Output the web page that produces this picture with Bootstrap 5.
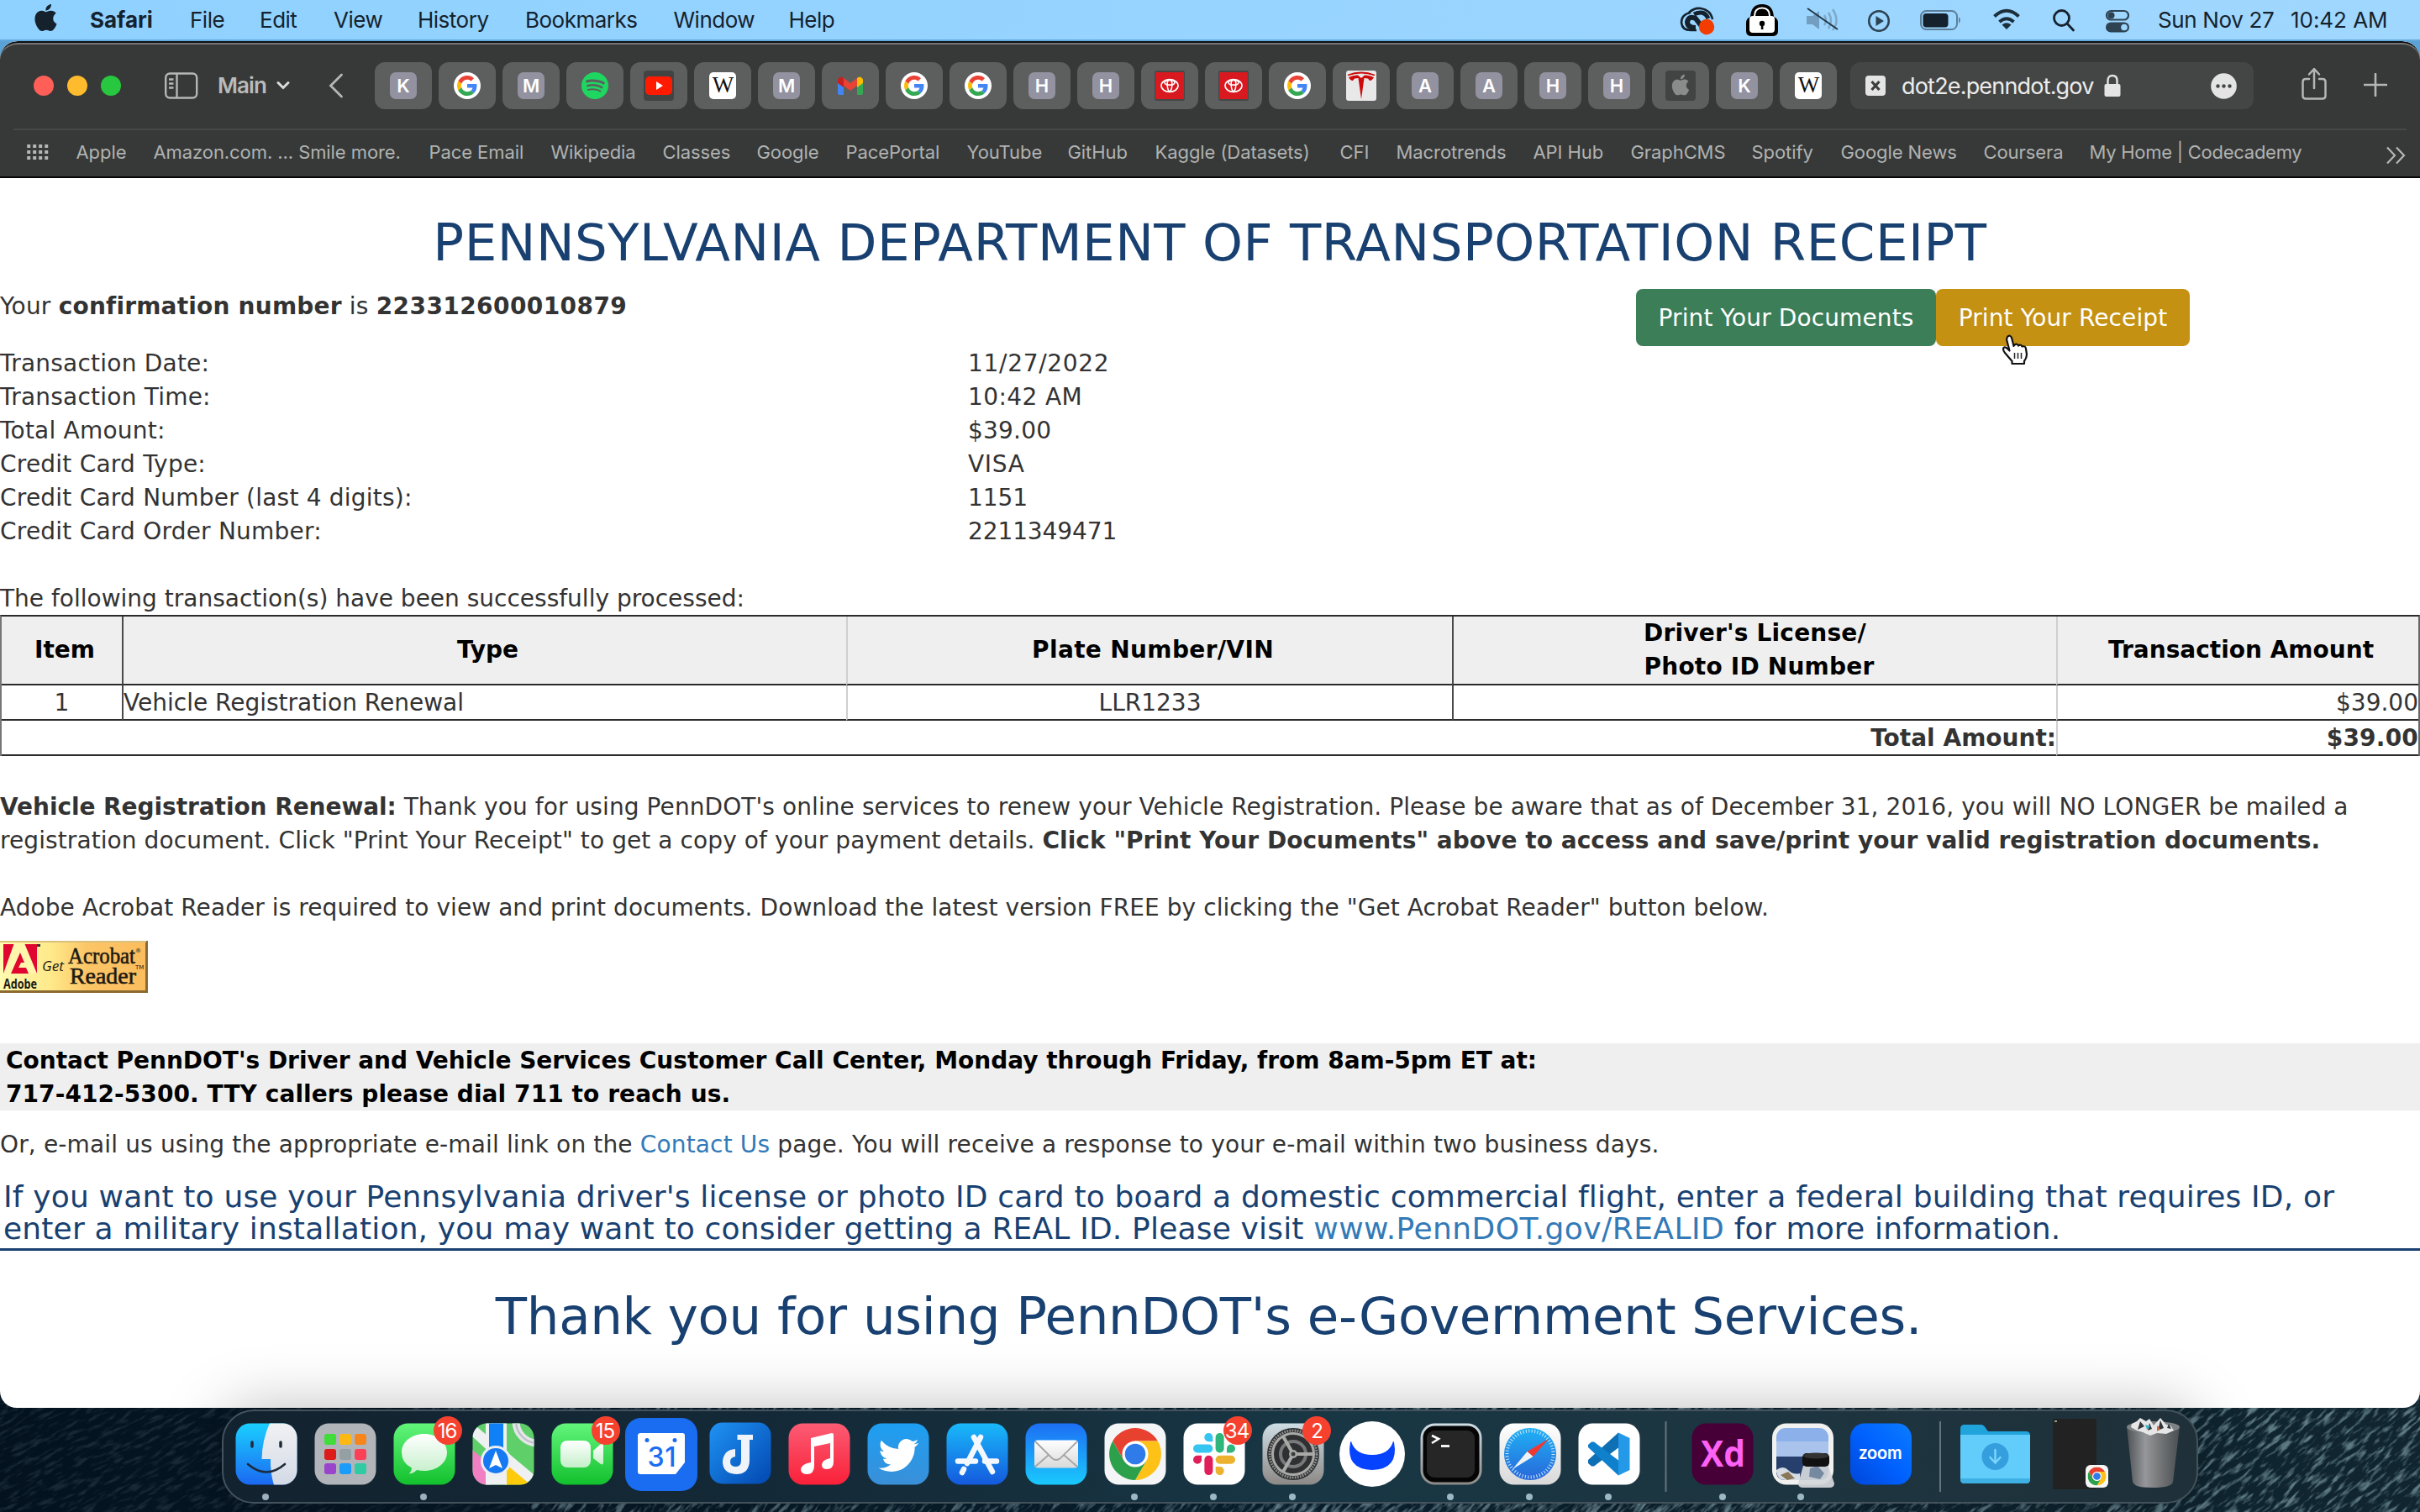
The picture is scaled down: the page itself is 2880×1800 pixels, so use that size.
<!DOCTYPE html>
<html lang="en">
<head>
<meta charset="utf-8">
<title>PennDOT Receipt</title>
<link rel="stylesheet" href="https://cdn.jsdelivr.net/npm/bootstrap@5.3.0/dist/css/bootstrap.min.css">
<script src="https://cdn.jsdelivr.net/npm/bootstrap@5.3.0/dist/js/bootstrap.bundle.min.js"></script>
<style>
html,body{width:2880px;height:1800px;overflow:hidden}
body{background:#04121f;font-family:Inter,"Liberation Sans",sans-serif}
svg{display:block;flex:none}
.wallpaper{left:0;top:0;z-index:0}
/* menu bar */
.menubar{height:49px;background:linear-gradient(90deg,#8fd1ff,#97d4ff 50%,#a0d7ff);font-size:26px;line-height:47px;color:#15222d;border-bottom:2px solid #62a9dd;white-space:nowrap}
.menus{display:grid;grid-template-columns:67px 119px 83px 88px 100px 128px 176.5px 137px 70px;padding-left:40px;letter-spacing:-.5px}
.status{display:grid;grid-template-columns:80px 72px 73px 62px 87px 71px 63px 63px 158px 155px;letter-spacing:-.35px}
/* browser window */
.browser{height:1627px;border-radius:21px 21px 20px 20px;overflow:hidden;background:#fff;z-index:1}
.chrome{height:163px;background:#373938;border-top:2px solid #0d0f10;border-bottom:2px solid #050505;box-shadow:inset 0 2px 0 #747675;border-radius:21px 21px 0 0}
.toolrow{height:102px;padding:0 0 0 40px}
.light{width:24px;height:24px;border-radius:50%}
.mainlabel{font-size:26px;font-weight:600;color:#b9bbba;letter-spacing:-.9px;line-height:30px}
.tab{width:68px;height:56px;border-radius:12px;background:#5d5f5e;display:flex;align-items:center;justify-content:center}
.tabs{gap:8px}
.letter{width:32px;height:32px;border-radius:7px;background:#9292a0;color:#fff;font-size:22px;font-weight:600;line-height:32px;text-align:center}
.wiki{width:32px;height:32px;border-radius:5px;background:#fff;color:#111;font:27px/31px "Liberation Serif",serif;text-align:center;letter-spacing:-1px}
.address{width:480px;height:56px;border-radius:12px;background:#444645;padding:0 20px 0 18px}
.urltext{font-size:27px;letter-spacing:-.82px;color:#ececec;line-height:50px;padding-top:2px}
.rule{height:2px;margin:0 16px;background:#464847}
.bookmarks{display:grid;grid-template-columns:58.5px 92px 328px 145px 133px 112px 106px 144px 120px 104px 220px 67px 163px 116px 144px 106px 170px 126px 352px 30px;padding-left:32px;height:54px;line-height:53px;font-size:22px;color:#b0b2b1;letter-spacing:-.08px;white-space:nowrap}
/* receipt page */
.receipt{font-family:"DejaVu Sans",Verdana,sans-serif;font-size:28px;line-height:40px;color:#333;padding-top:44px;white-space:nowrap}
.bigline{font-size:61px;line-height:66px;color:#184070;font-weight:400;margin:0}
.heading{letter-spacing:.53px;margin-bottom:23px}
.thanks{letter-spacing:-.31px;margin-top:45px;padding-right:3px}
.details{display:grid;grid-template-columns:1152px 1fr;margin-top:28px;letter-spacing:.22px}
.pbtn{height:68px;border:0;border-radius:8px;font-size:28px;line-height:67px;padding:0;color:#fff;letter-spacing:.12px}
.pdocs{width:357px;background:#3b7e58}
.prcpt{width:302px;background:#c49112}
.actions{margin:-1px 274px 0 0;height:28px}
.items{width:2880px;table-layout:fixed;border-collapse:separate;border-spacing:0;margin-top:-1px;border-top:2px solid #2b2b2b;border-left:2px solid #777;border-right:2px solid #666}
.items th,.items td{padding:2px 0 0;line-height:38px;border-bottom:2px solid #2b2b2b;height:42px}
.items th{background:#efefef;color:#000;text-align:center;padding-left:7px;line-height:40px;height:82px;padding-top:0}
.items .ldark{border-left:2px solid #4a4a4a}
.items .llight{border-left:2px solid #cfcfcf}
.acro{margin-top:19px}
.contact{background:#efefef;color:#000;font-weight:700;height:80px;padding:1px 0 0 7px;margin-top:60px;letter-spacing:-.02px}
.realid{font-size:36px;line-height:38px;color:#184070;margin:23px 0 0;padding:0 0 4px 4px;border-bottom:3px solid #184070;letter-spacing:.175px}
.receipt a{color:#337ab7;text-decoration:none}
/* dock */
.dockwrap{z-index:2;padding:2px 0 0 264px}
.dock{width:2352px;height:112px;border:2px solid #43525c;border-radius:38px;background:linear-gradient(90deg,#13222f,#142a38 30%,#183644 55%,#1d3540 80%,#1f3039);padding-left:4px;box-shadow:0 0 74px rgba(0,0,0,.27)}
.cursor{left:2381px;top:396px;z-index:3}
.badgenum{font:24px Inter,sans-serif;fill:#fff;text-anchor:middle;letter-spacing:-1px}
</style>
</head>
<body>
<svg width="0" height="0" class="position-absolute">
<defs>
<symbol id="g" viewBox="0 0 32 32"><circle cx="16" cy="16" r="16" fill="#fff"/><g transform="translate(4 4) scale(.5)"><path fill="#ea4335" d="M24 9.5c3.54 0 6.71 1.22 9.21 3.6l6.85-6.85C35.9 2.38 30.47 0 24 0 14.62 0 6.51 5.38 2.56 13.22l7.98 6.19C12.43 13.72 17.74 9.5 24 9.5z"/><path fill="#4285f4" d="M46.98 24.55c0-1.57-.15-3.09-.38-4.55H24v9.02h12.94c-.58 2.96-2.26 5.48-4.78 7.18l7.73 6c4.51-4.18 7.09-10.36 7.09-17.65z"/><path fill="#fbbc05" d="M10.53 28.59c-.48-1.45-.76-2.99-.76-4.59s.27-3.14.76-4.59l-7.98-6.19C.92 16.46 0 20.12 0 24c0 3.88.92 7.54 2.56 10.78l7.97-6.19z"/><path fill="#34a853" d="M24 48c6.48 0 11.93-2.13 15.89-5.81l-7.73-6c-2.15 1.45-4.92 2.3-8.16 2.3-6.26 0-11.57-4.22-13.47-9.91l-7.98 6.19C6.51 42.62 14.62 48 24 48z"/></g></symbol>
<symbol id="apple" viewBox="0 0 16 16"><path d="M11.182.008C11.148-.03 9.923.023 8.857 1.18c-1.066 1.156-.902 2.482-.878 2.516.024.034 1.52.087 2.475-1.258.955-1.345.762-2.391.728-2.43Zm3.314 11.733c-.048-.096-2.325-1.234-2.113-3.422.212-2.189 1.675-2.789 1.698-2.854.023-.065-.597-.79-1.254-1.157a3.692 3.692 0 0 0-1.563-.434c-.108-.003-.483-.095-1.254.116-.508.139-1.653.589-1.968.607-.316.018-1.256-.522-2.267-.665-.647-.125-1.333.131-1.824.328-.49.196-1.422.754-2.074 2.237-.652 1.482-.311 3.83-.067 4.56.244.729.625 1.924 1.273 2.796.576.984 1.34 1.667 1.659 1.899.319.232 1.219.386 1.843.067.502-.308 1.408-.485 1.766-.472.357.013 1.061.154 1.782.539.571.197 1.111.115 1.652-.105.541-.221 1.324-1.059 2.238-2.758.347-.79.505-1.217.473-1.282Z"/></symbol>
<symbol id="toyota" viewBox="0 0 36 36"><rect width="36" height="36" rx="3" fill="#454746"/><rect x="1" y="2" width="34" height="32" rx="1" fill="#d8191f"/><g fill="none" stroke="#fff" stroke-width="1.6"><ellipse cx="18" cy="18" rx="10" ry="7.4"/><ellipse cx="18" cy="14.3" rx="6" ry="2.8"/><path d="M15.200 14q-.4 9 2.800 11.200 3.200-2.200 2.800-11.200Q20 11 18 10.800 16 11 15.200 14Z"/></g></symbol>
<symbol id="chromelogo" viewBox="-31 -31 62 62"><path fill="#e8412f" d="M-26.8-15.5A31 31 0 0 1 26.8-15.5L0-15.5 0 0-13.4 7.75Z"/><path fill="#fdc117" transform="rotate(120)" d="M-26.8-15.5A31 31 0 0 1 26.8-15.5L0-15.5 0 0-13.4 7.75Z"/><path fill="#2da04b" transform="rotate(240)" d="M-26.8-15.5A31 31 0 0 1 26.8-15.5L0-15.5 0 0-13.4 7.75Z"/><circle r="15.5" fill="#fff"/><circle r="12.3" fill="#2f7be9"/></symbol>
<linearGradient id="gFinder" x2="0" y2="1"><stop stop-color="#1ad0ff"/><stop offset="1" stop-color="#1b68f2"/></linearGradient>
<linearGradient id="gFace" x2="0" y2="1"><stop stop-color="#f1f1f3"/><stop offset="1" stop-color="#d3dae6"/></linearGradient>
<linearGradient id="gGreen" x2="0" y2="1"><stop stop-color="#62f57b"/><stop offset="1" stop-color="#12c02d"/></linearGradient>
<linearGradient id="gWhite" x2="0" y2="1"><stop stop-color="#fff"/><stop offset="1" stop-color="#c4efc9"/></linearGradient>
<linearGradient id="gJ" x2="1" y2="1"><stop stop-color="#1f93f4"/><stop offset="1" stop-color="#0247b0"/></linearGradient>
<linearGradient id="gMusic" x2="0" y2="1"><stop stop-color="#fb5c74"/><stop offset="1" stop-color="#fa2039"/></linearGradient>
<linearGradient id="gTw" x2="0" y2="1"><stop stop-color="#1d9ff2"/><stop offset="1" stop-color="#3a8fd8"/></linearGradient>
<linearGradient id="gStore" x2="0" y2="1"><stop stop-color="#19b9fa"/><stop offset="1" stop-color="#1459dd"/></linearGradient>
<linearGradient id="gMail" x2="0" y2="1"><stop stop-color="#1d6ff3"/><stop offset="1" stop-color="#1ac9fd"/></linearGradient>
<linearGradient id="gSet" x2="0" y2="1"><stop stop-color="#cfdde5"/><stop offset="1" stop-color="#8c8986"/></linearGradient>
<linearGradient id="gPaper" x2="0" y2="1"><stop stop-color="#fff"/><stop offset="1" stop-color="#d9d9d9"/></linearGradient>
<linearGradient id="gSaf" x2="0" y2="1"><stop stop-color="#1fb1f5"/><stop offset="1" stop-color="#2867d9"/></linearGradient>
<linearGradient id="gZoom" x1="1" x2="0" y2="1"><stop stop-color="#0b7cff"/><stop offset=".5" stop-color="#0061ff"/><stop offset="1" stop-color="#0046d8"/></linearGradient>
<linearGradient id="gTrash"><stop stop-color="#4f5254"/><stop offset=".35" stop-color="#95979a"/><stop offset=".6" stop-color="#77797b"/><stop offset="1" stop-color="#4a4e50"/></linearGradient>
<linearGradient id="gAcro"><stop stop-color="#fffbb0"/><stop offset=".35" stop-color="#ffe98a"/><stop offset=".6" stop-color="#fcc566"/><stop offset="1" stop-color="#fbbd5e"/></linearGradient>
<linearGradient id="gSea" x2="1"><stop stop-color="#04121f"/><stop offset=".5" stop-color="#0a2231"/><stop offset="1" stop-color="#10252f"/></linearGradient>
<clipPath id="tile"><rect x="10.5" y="14.5" width="73" height="73" rx="17"/></clipPath>
<filter id="water" x="0" y="0" width="1" height="1"><feTurbulence type="fractalNoise" baseFrequency=".05 .2" numOctaves="4" seed="7"/><feColorMatrix values="0 0 0 0 .34  0 0 0 0 .52  0 0 0 0 .58  4 0 0 0 -1.95"/></filter>
</defs>
</svg>

<svg class="wallpaper position-absolute" width="2880" height="1800">
<rect width="2880" height="120" fill="#5ba3d6"/>
<rect y="1600" width="2880" height="200" fill="url(#gSea)"/>
<g transform="rotate(-28 0 1700)" opacity=".13"><rect y="1500" x="-200" width="900" height="600" filter="url(#water)"/></g>
<g transform="rotate(-50 1500 1740)" opacity=".5"><rect y="900" x="900" width="1000" height="1400" filter="url(#water)"/></g>
<g transform="rotate(-42 2400 1740)" opacity=".55"><rect y="1100" x="1700" width="1500" height="1200" filter="url(#water)"/></g>
</svg>

<nav class="menubar d-flex justify-content-between position-relative">
<div class="menus">
<svg width="28" height="36" viewBox="0 0 28 36" style="margin-top:4px"><use href="#apple" x="-2" y="1" width="33" height="32" fill="#15222d"/></svg>
<span class="fw-bold" style="letter-spacing:0">Safari</span><span>File</span><span>Edit</span><span>View</span><span>History</span><span>Bookmarks</span><span>Window</span><span>Help</span>
</div>
<div class="status">
<svg width="48" height="48" viewBox="0 0 48 48"><g fill="none" stroke="#15222d"><path stroke-width="2.600" d="M16 15Q5 17 5 27 6 36 16 36H23M14 15Q20 9 28 10 40 12 42 23"/><path stroke-width="6" d="M22 33Q12 33 12 26 14 18 22 22L28 30"/><path stroke-width="5" d="M20 17Q32 11 37 22"/></g><circle cx="35" cy="32" r="9.200" fill="#f23c00"/></svg>
<svg width="48" height="48" viewBox="0 0 48 48"><path d="M7 20Q8 5 21 5 34 5 35 20 40 22 40 27V37Q40 43 33 43H9Q2 43 2 37V27Q2 22 7 20Z"/><rect x="6" y="19" width="30" height="20" rx="4" fill="#fff"/><path d="M12 19Q12 9.500 21 9.500T30 19" fill="none" stroke="#fff" stroke-width="2"/><circle cx="21" cy="28" r="3.200"/><path d="M19.800 28h2.600v7h-2.600z"/></svg>
<svg width="48" height="48" viewBox="0 0 48 48"><path fill="#729fc1" d="M2 19h7l8-6v22l-8-6H2Z"/><path fill="none" stroke="#7ea8c8" stroke-width="2.500" d="M23 18q4 6 0 12M28 15q6 9 0 19M33 11q9 14 0 25"/><path stroke="#243644" stroke-width="2" d="M3 10 39 35"/></svg>
<svg width="48" height="48" viewBox="0 0 48 48"><circle cx="15" cy="25" r="11.800" fill="none" stroke="#2d4353" stroke-width="2.500"/><path d="M11.500 19 21 25l-9.500 6Z" fill="#2d4353"/></svg>
<svg width="56" height="48" viewBox="0 0 56 48"><rect x="3" y="13" width="43" height="22" rx="6.500" fill="none" stroke="#5b7f98" stroke-width="2"/><rect x="5.500" y="16" width="30" height="16.500" rx="4" fill="#15222d"/><path d="M48 20q4 4 0 8Z" fill="#5b7f98"/></svg>
<svg width="40" height="48" viewBox="0 0 40 48"><g fill="none" stroke="#1d2e3b" stroke-width="4"><path d="M3.500 19.500Q18 6 32.500 19.500"/><path d="M9.500 26Q18 18.500 26.500 26"/></g><path d="M12.500 29.500q5.500-4.500 11 0L18 35Z" fill="#1d2e3b"/></svg>
<svg width="40" height="48" viewBox="0 0 40 48"><g fill="none" stroke="#15222d" stroke-width="2.800"><circle cx="12.500" cy="21.500" r="9"/><path d="m19 28 7.500 8" stroke-linecap="round"/></g></svg>
<svg width="40" height="48" viewBox="0 0 40 48"><rect x="3" y="13" width="26" height="10.500" rx="5.250" fill="none" stroke="#2d4353" stroke-width="2.200"/><circle cx="8.500" cy="18.200" r="4" fill="#2d4353"/><rect x="2" y="26.500" width="28" height="12" rx="6" fill="#2d4353"/><circle cx="24" cy="32.500" r="3.800" fill="#a0d7ff"/></svg>
<span style="padding-left:1px">Sun Nov 27</span><span style="letter-spacing:-.05px;padding-left:1px">10:42 AM</span>
</div>
</nav>

<main class="browser position-relative">
<header class="chrome">
<div class="toolrow d-flex align-items-center">
<div class="d-flex" style="gap:16px"><span class="light" style="background:#ff5f57"></span><span class="light" style="background:#febb2e"></span><span class="light" style="background:#27c840"></span></div>
<svg width="40" height="32" viewBox="0 0 40 32" style="margin-left:52px"><g fill="none" stroke="#b5b7b6" stroke-width="2.400"><rect x="1.200" y="1.500" width="37" height="29" rx="5"/><path d="M14.500 2v28M5 8.500h5.500M5 13.500h5.500M5 18.500h5.500"/></g></svg>
<span class="mainlabel" style="margin-left:23px;margin-right:-1px">Main</span>
<svg width="16" height="12" viewBox="0 0 16 12" style="margin-left:13px"><path d="m2 2.500 6 6 6-6" fill="none" stroke="#dcdcdc" stroke-width="3" stroke-linecap="round"/></svg>
<svg width="18" height="30" viewBox="0 0 18 30" style="margin-left:46px"><path d="M15.500 2 2.500 15l13 13" fill="none" stroke="#b5b7b6" stroke-width="2.800" stroke-linecap="round"/></svg>
<div class="tabs d-flex" style="margin-left:37px">
<span class="tab"><i class="letter fst-normal">K</i></span>
<span class="tab"><svg width="32" height="32"><use href="#g"/></svg></span>
<span class="tab"><i class="letter fst-normal">M</i></span>
<span class="tab"><svg width="32" height="32" viewBox="0 0 16 16"><path fill="#1ed760" d="M8 0a8 8 0 1 0 0 16A8 8 0 0 0 8 0zm3.669 11.538a.498.498 0 0 1-.686.166c-1.879-1.148-4.243-1.408-7.028-.772a.499.499 0 0 1-.222-.973c3.048-.696 5.662-.397 7.770.892a.5.5 0 0 1 .166.687zm.979-2.178a.624.624 0 0 1-.858.205c-2.150-1.321-5.428-1.704-7.972-.932a.625.625 0 0 1-.362-1.194c2.905-.881 6.517-.454 8.986 1.063a.624.624 0 0 1 .206.858zm.084-2.268C10.154 5.560 5.900 5.419 3.438 6.166a.748.748 0 1 1-.434-1.432c2.825-.857 7.523-.692 10.492 1.070a.747.747 0 1 1-.764 1.288z"/></svg></span>
<span class="tab"><svg width="36" height="36" viewBox="0 0 36 36"><rect width="36" height="36" rx="4" fill="#424443"/><rect x="2" y="7" width="32" height="22" rx="5" fill="#ff1a00"/><path d="m15 13 8 5-8 5Z" fill="#fff"/></svg></span>
<span class="tab"><i class="wiki fst-normal">W</i></span>
<span class="tab"><i class="letter fst-normal">M</i></span>
<span class="tab"><svg width="30" height="22" viewBox="0 0 30 22"><path fill="#4285f4" d="M0 4h7v18H2q-2 0-2-2Z"/><path fill="#34a853" d="M23 4h7v16q0 2-2 2h-5Z"/><path fill="#fbbc04" d="M23 2q3-3 6 0 1 1 1 3v3l-7 5Z"/><path fill="#c5221f" d="M7 2Q4-1 1 2 0 3 0 5v3l7 5Z"/><path fill="#ea4335" d="M7 2l8 6 8-6v9l-8 6-8-6Z"/></svg></span>
<span class="tab"><svg width="32" height="32"><use href="#g"/></svg></span>
<span class="tab"><svg width="32" height="32"><use href="#g"/></svg></span>
<span class="tab"><i class="letter fst-normal">H</i></span>
<span class="tab"><i class="letter fst-normal">H</i></span>
<span class="tab"><svg width="36" height="36"><use href="#toyota"/></svg></span>
<span class="tab"><svg width="36" height="36"><use href="#toyota"/></svg></span>
<span class="tab"><svg width="32" height="32"><use href="#g"/></svg></span>
<span class="tab"><svg width="36" height="36" viewBox="0 0 36 36"><rect width="36" height="36" rx="3" fill="#e8e8e8"/><path fill="none" stroke="#cc0c0c" stroke-width="1.800" d="M2 5.500Q18-.5 34 5.500"/><path fill="#cc0c0c" d="M3 8Q9 5 14 5.500L18 9l4-3.500Q27 5 33 8 31 12 28 12L26 9.500 21.500 9 18 34 14.500 9 10 9.500 8 12Q5 12 3 8Z"/></svg></span>
<span class="tab"><i class="letter fst-normal">A</i></span>
<span class="tab"><i class="letter fst-normal">A</i></span>
<span class="tab"><i class="letter fst-normal">H</i></span>
<span class="tab"><i class="letter fst-normal">H</i></span>
<span class="tab"><svg width="36" height="36"><rect width="36" height="36" rx="4" fill="#424443"/><use href="#apple" x="5.500" y="4.500" width="25" height="25" fill="#8a8c8b"/></svg></span>
<span class="tab"><i class="letter fst-normal">K</i></span>
<span class="tab"><i class="wiki fst-normal">W</i></span>
</div>
<div class="address d-flex align-items-center" style="margin-left:16px">
<svg width="24" height="24" viewBox="0 0 24 24"><rect width="24" height="24" rx="4" fill="#e4e4e4"/><path d="m7.500 7 9 10m0-10-9 10" stroke="#3c3e3d" stroke-width="3.200"/></svg>
<span class="urltext" style="margin-left:19px">dot2e.penndot.gov</span>
<svg width="20" height="28" viewBox="0 0 20 28" style="margin-left:12px"><rect x=".5" y="12" width="19" height="15" rx="2" fill="#e4e4e4"/><path d="M4.500 13V8q0-6 5.500-6t5.500 6v5" fill="none" stroke="#e4e4e4" stroke-width="2.400"/></svg>
<svg width="31" height="31" viewBox="0 0 31 31" class="ms-auto"><circle cx="15.500" cy="15.500" r="15.300" fill="#e4e4e4"/><g fill="#444645"><circle cx="8.500" cy="15.500" r="2.200"/><circle cx="15.500" cy="15.500" r="2.200"/><circle cx="22.500" cy="15.500" r="2.200"/></g></svg>
</div>
<svg width="30" height="40" viewBox="0 0 30 40" style="margin:-4px 0 0 57px"><g fill="none" stroke="#b5b7b6" stroke-width="2.500" stroke-linejoin="round" stroke-linecap="round"><path d="M9 14H5q-3.500 0-3.500 3.500V34q0 3.500 3.500 3.500h20q3.500 0 3.500-3.500V17.500Q28.500 14 25 14h-4M15 25V3M9 8.500 15 2l6 6.500"/></g></svg>
<svg width="28" height="28" viewBox="0 0 28 28" style="margin:-3px 0 0 44px"><path d="M14 1v26M1 14h26" stroke="#b5b7b6" stroke-width="2.600" stroke-linecap="round"/></svg>
</div>
<div class="rule"></div>
<div class="bookmarks">
<svg width="26" height="18" viewBox="0 0 26 18" style="margin-top:17px"><path d="M2.200 0v18M9.200 0v18M16.200 0v18M23.200 0v18" stroke="#b5b7b6" stroke-width="4" stroke-dasharray="4 3"/></svg>
<span>Apple</span><span>Amazon.com. ... Smile more.</span><span>Pace Email</span><span>Wikipedia</span><span>Classes</span><span>Google</span><span>PacePortal</span><span>YouTube</span><span>GitHub</span><span>Kaggle (Datasets)</span><span>CFI</span><span>Macrotrends</span><span>API Hub</span><span>GraphCMS</span><span>Spotify</span><span>Google News</span><span>Coursera</span><span style="letter-spacing:-.26px">My Home | Codecademy</span>
<svg width="24" height="22" viewBox="0 0 24 22" style="margin-top:19px"><path d="m2 1.500 9 9.500-9 9.500m11-19 9 9.500-9 9.500" fill="none" stroke="#b5b7b6" stroke-width="2.200"/></svg>
</div>
</header>

<section class="receipt">
<h1 class="bigline heading text-center">PENNSYLVANIA DEPARTMENT OF TRANSPORTATION RECEIPT</h1>
<div class="d-flex justify-content-between">
<div style="letter-spacing:.2px">Your <b>confirmation number</b> is <b style="letter-spacing:.42px">223312600010879</b></div>
<div class="actions d-flex"><button class="btn pbtn pdocs">Print Your Documents</button><button class="btn pbtn prcpt">Print Your Receipt</button></div>
</div>
<div class="details">
<span>Transaction Date:</span><span style="letter-spacing:.7px">11/27/2022</span>
<span>Transaction Time:</span><span style="letter-spacing:.4px">10:42 AM</span>
<span>Total Amount:</span><span>$39.00</span>
<span>Credit Card Type:</span><span style="letter-spacing:.7px">VISA</span>
<span>Credit Card Number (last 4 digits):</span><span style="letter-spacing:-.1px">1151</span>
<span>Credit Card Order Number:</span><span style="letter-spacing:-.1px">2211349471</span>
</div>
<div style="margin-top:40px">The following transaction(s) have been successfully processed:</div>
<table class="items">
<colgroup><col style="width:143px"><col style="width:862px"><col style="width:721px"><col style="width:719px"><col></colgroup>
<tr><th>Item</th><th class="ldark">Type</th><th class="llight" style="letter-spacing:.35px">Plate Number/VIN</th><th class="ldark" style="padding-left:0;letter-spacing:.2px">Driver's License/<br>&nbsp;Photo ID Number</th><th class="llight">Transaction Amount</th></tr>
<tr><td class="text-center">1</td><td class="ldark">Vehicle Registration Renewal</td><td class="llight text-center">LLR1233</td><td class="ldark"></td><td class="llight text-end">$39.00</td></tr>
<tr class="fw-bold"><td colspan="4" class="text-end">Total Amount:</td><td class="llight text-end" style="letter-spacing:.2px">$39.00</td></tr>
</table>
<div style="margin-top:41px"><b style="letter-spacing:-.06px">Vehicle Registration Renewal:</b> <span style="letter-spacing:.09px">Thank you for using PennDOT's online services to renew your Vehicle Registration. Please be aware that as of December 31, 2016, you will NO LONGER be mailed a</span><br><span style="letter-spacing:.09px">registration document. Click "Print Your Receipt" to get a copy of your payment details.</span> <b style="letter-spacing:.04px">Click "Print Your Documents" above to access and save/print your valid registration documents.</b></div>
<div style="margin-top:40px;letter-spacing:.071px">Adobe Acrobat Reader is required to view and print documents. Download the latest version FREE by clicking the "Get Acrobat Reader" button below.</div>
<svg class="acro" width="176" height="62" viewBox="0 0 176 62"><rect width="176" height="62" fill="#8a6a30"/><rect width="173" height="59" fill="url(#gAcro)"/><path d="M0 1h174" stroke="#d9c07c" stroke-width="2"/><path fill="#e0062f" d="M4 4h40v35H4Z"/><path fill="#fff6ae" d="M16.500 4h13L44 39H34L31 32H22l3-6h4l-5-12L13 39H4Z"/><path fill="#333" d="M44 4h4v3h-4z"/><g fill="#1d1a12"><text x="4" y="57" font-family="Open Sans" font-weight="700" font-size="16" textLength="40" lengthAdjust="spacingAndGlyphs">Adobe</text><text x="50" y="36" font-family="Open Sans" font-style="italic" font-size="16" textLength="26" lengthAdjust="spacingAndGlyphs">Get</text><g font-family="Liberation Serif" font-size="27" stroke="#1d1a12" stroke-width=".6"><text x="81" y="27" textLength="80" lengthAdjust="spacingAndGlyphs">Acrobat</text><text x="83" y="51" textLength="79" lengthAdjust="spacingAndGlyphs">Reader</text></g><text x="161" y="14" font-size="7">®</text><text x="161" y="34" font-size="7">TM</text></g></svg>
<div class="contact">Contact PennDOT's Driver and Vehicle Services Customer Call Center, Monday through Friday, from 8am-5pm ET at:<br><span style="letter-spacing:.08px">717-412-5300. TTY callers please dial 711 to reach us.</span></div>
<div style="margin-top:21px;letter-spacing:.15px">Or, e-mail us using the appropriate e-mail link on the <a href="#">Contact Us</a> page. You will receive a response to your e-mail within two business days.</div>
<h4 class="realid fw-normal">If you want to use your Pennsylvania driver's license or photo ID card to board a domestic commercial flight, enter a federal building that requires ID, or<br>enter a military installation, you may want to consider getting a REAL ID. Please visit <a href="#" style="letter-spacing:.45px">www.PennDOT.gov/REALID</a> for more information.</h4>
<h1 class="bigline thanks text-center">Thank you for using PennDOT's e-Government Services.</h1>
</section>
</main>

<svg class="cursor position-absolute" width="34" height="40" viewBox="0 0 34 40"><path d="M8 5q3-3 5 1l2.500 10 1-1.500q3-2 4.500 1 3-2 4.500 1 4-1 4.500 2.500l1 7q0 4-3 8v3H13.500v-3L5 24q-3-4-1.500-6 2-1.500 5 1.500l2 2L7 8Z" fill="#fff" stroke="#111" stroke-width="2.200" stroke-linejoin="round"/><path d="M16.500 24v7M20.500 24v7M24.500 24v7" stroke="#222" stroke-width="1.500"/></svg>

<footer class="dockwrap position-relative">
<div class="dock d-flex">
<!-- Finder -->
<svg width="94" height="108"><g clip-path="url(#tile)"><rect x="10" y="14" width="74" height="74" fill="url(#gFinder)"/><path fill="url(#gFace)" d="M51 14Q42 34 41.500 57H52Q51.500 73 56 88H84V14Z"/></g><g fill="none" stroke="#1d2b3a" stroke-linecap="round"><path stroke-width="3.500" d="M30 37v5M64 37v5"/><path stroke-width="2.600" d="M25 63Q47 82 69 63"/></g><circle cx="46" cy="102" r="4" fill="#9db0c0"/></svg>
<!-- Launchpad -->
<svg width="94" height="108"><rect x="10.500" y="14.500" width="73" height="73" rx="17" fill="#b1b5ba"/><g><rect x="22" y="27" width="14" height="13" rx="3" fill="#3fdc3a"/><rect x="40" y="27" width="14" height="13" rx="3" fill="#fdb813"/><rect x="58" y="27" width="14" height="13" rx="3" fill="#f6861b"/><rect x="22" y="45" width="14" height="13" rx="3" fill="#dc1b1a"/><rect x="40" y="45" width="14" height="13" rx="3" fill="#95a0a4"/><rect x="58" y="45" width="14" height="13" rx="3" fill="#fc4058"/><rect x="22" y="62" width="14" height="13" rx="3" fill="#9a43cd"/><rect x="40" y="62" width="14" height="13" rx="3" fill="#1a9cf8"/><rect x="58" y="62" width="14" height="13" rx="3" fill="#30cba2"/></g></svg>
<!-- Messages -->
<svg width="94" height="108"><rect x="10.500" y="14.500" width="73" height="73" rx="17" fill="url(#gGreen)"/><path fill="url(#gWhite)" d="M47 27c15 0 27 9.500 27 22S62 71 47 71q-5 0-9-1-4 4-9 4.500 3-3 3-7-12-6-12-18.500C20 36.500 32 27 47 27Z"/><circle cx="75" cy="23" r="17" fill="#f6412f"/><text class="badgenum" x="74" y="31.500">16</text><circle cx="46" cy="102" r="4" fill="#9db0c0"/></svg>
<!-- Maps -->
<svg width="94" height="108"><g clip-path="url(#tile)"><rect x="10" y="14" width="74" height="74" fill="#5fd069"/><path fill="#f07fc4" d="M10 46 32 64V88H10Z"/><path fill="#eef0f2" d="M10 30 84 98V76L10 14Z"/><path fill="#fecb0b" d="M49 62 80 88H49Z"/><path fill="#eef0f2" d="M26 14h25v74H26Z"/><path fill="#0f80f5" d="M30 14h17v40H30Z"/><circle cx="88" cy="12" r="26" fill="none" stroke="#e3e5e8" stroke-width="9"/><circle cx="88" cy="12" r="26" fill="none" stroke="#b9bcc2" stroke-width="2"/></g><circle cx="38" cy="59" r="18" fill="#eceef2"/><circle cx="38" cy="59" r="15" fill="#1479f2"/><path d="m38 47 8 21-8-4-8 4Z" fill="#fff"/></svg>
<!-- FaceTime -->
<svg width="94" height="108"><rect x="10.500" y="14.500" width="73" height="73" rx="17" fill="url(#gGreen)"/><rect x="21" y="35" width="36" height="32" rx="8" fill="url(#gWhite)"/><path d="M60 47 69 39q3-1.500 3 2V61q0 3.500-3 2L60 56Z" fill="url(#gWhite)"/><circle cx="75" cy="23" r="17" fill="#f6412f"/><text class="badgenum" x="74" y="31.500">15</text></svg>
<!-- Calendar -->
<svg width="94" height="108"><rect x="4" y="8" width="86" height="87" rx="19" fill="#1a6df0"/><path fill="#fff" d="M21 26h51q3 0 3 3V61L64 75H22q-3 0-3-3V28Z"/><circle cx="30" cy="34.500" r="2.500" fill="#1a6df0"/><circle cx="63" cy="34.500" r="2.500" fill="#1a6df0"/><text x="46.500" y="66" text-anchor="middle" font-family="Inter" font-weight="500" font-size="32" letter-spacing="-2" fill="#1a6df0" textLength="32">31</text></svg>
<!-- J -->
<svg width="94" height="108"><rect x="10.500" y="13.500" width="73" height="73" rx="15" fill="url(#gJ)"/><path d="M43.500 28H62v6H58V58Q58 75 42 75 26 74 26 60 27 46 41 45V54Q35 55 35 60 35 66 42 66 48 66 48 58V34H43.500Z" fill="#eff4fa"/></svg>
<!-- Music -->
<svg width="94" height="108"><rect x="10.500" y="14.500" width="73" height="73" rx="17" fill="url(#gMusic)"/><path fill="#fff" d="M37 32 62 26q2 0 2 2V60q0 9-8 9-6 0-6-5 0-6 10-8V38L41 42V65q0 10-9 10-6 0-7-5 0-7 12-9Z"/></svg>
<!-- Twitter -->
<svg width="94" height="108"><rect x="10.500" y="14.500" width="73" height="73" rx="17" fill="url(#gTw)"/><path transform="translate(23.500 27) scale(3)" fill="#fff" d="M5.026 15c6.038 0 9.341-5.003 9.341-9.334 0-.14 0-.282-.006-.422A6.685 6.685 0 0 0 16 3.542a6.658 6.658 0 0 1-1.889.518 3.301 3.301 0 0 0 1.447-1.817 6.533 6.533 0 0 1-2.087.793A3.286 3.286 0 0 0 7.875 6.030a9.325 9.325 0 0 1-6.767-3.429 3.289 3.289 0 0 0 1.018 4.382A3.323 3.323 0 0 1 .64 6.575v.045a3.288 3.288 0 0 0 2.632 3.218 3.203 3.203 0 0 1-.865.115 3.230 3.230 0 0 1-.614-.057 3.283 3.283 0 0 0 3.067 2.277A6.588 6.588 0 0 1 .78 13.580a6.320 6.320 0 0 1-.78-.045A9.344 9.344 0 0 0 5.026 15z"/></svg>
<!-- App Store -->
<svg width="94" height="108"><rect x="10.500" y="14.500" width="73" height="73" rx="17" fill="url(#gStore)"/><g stroke="#f3f8ff" stroke-width="6.500" stroke-linecap="round"><path d="M51 31 35 62M31 69l-2 4M43 31 65 72"/><path d="M24 59.500H45M56 59.500H70"/></g></svg>
<!-- Mail -->
<svg width="94" height="108"><rect x="10.500" y="14.500" width="73" height="73" rx="17" fill="url(#gMail)"/><rect x="21" y="34.500" width="52" height="33" rx="4" fill="url(#gPaper)"/><g fill="none" stroke="#a5a5a5" stroke-width="1.800"><path d="M22 36 42 56q5 4 10 0L72 36M22 66 38 52M72 66 56 52"/></g></svg>
<!-- Chrome -->
<svg width="94" height="108"><rect x="10.500" y="14.500" width="73" height="73" rx="17" fill="#f4f5f6"/><use href="#chromelogo" x="16" y="20" width="62" height="62"/><circle cx="46" cy="102" r="4" fill="#9db8c5"/></svg>
<!-- Slack -->
<svg width="94" height="108"><rect x="10.500" y="14.500" width="73" height="73" rx="17" fill="#fff"/><g transform="translate(22 26) scale(.93)"><path fill="#36c5f0" d="M19.712.133a5.381 5.381 0 0 0-5.376 5.387 5.381 5.381 0 0 0 5.376 5.386h5.376V5.520A5.381 5.381 0 0 0 19.712.133m0 14.365H5.376A5.381 5.381 0 0 0 0 19.884a5.381 5.381 0 0 0 5.376 5.387h14.336a5.381 5.381 0 0 0 5.376-5.387 5.381 5.381 0 0 0-5.376-5.386"/><path fill="#2eb67d" transform="rotate(90 26.880 27)" d="M19.712.133a5.381 5.381 0 0 0-5.376 5.387 5.381 5.381 0 0 0 5.376 5.386h5.376V5.520A5.381 5.381 0 0 0 19.712.133m0 14.365H5.376A5.381 5.381 0 0 0 0 19.884a5.381 5.381 0 0 0 5.376 5.387h14.336a5.381 5.381 0 0 0 5.376-5.387 5.381 5.381 0 0 0-5.376-5.386"/><path fill="#ecb22e" transform="rotate(180 26.880 27)" d="M19.712.133a5.381 5.381 0 0 0-5.376 5.387 5.381 5.381 0 0 0 5.376 5.386h5.376V5.520A5.381 5.381 0 0 0 19.712.133m0 14.365H5.376A5.381 5.381 0 0 0 0 19.884a5.381 5.381 0 0 0 5.376 5.387h14.336a5.381 5.381 0 0 0 5.376-5.387 5.381 5.381 0 0 0-5.376-5.386"/><path fill="#e01e5a" transform="rotate(270 26.880 27)" d="M19.712.133a5.381 5.381 0 0 0-5.376 5.387 5.381 5.381 0 0 0 5.376 5.386h5.376V5.520A5.381 5.381 0 0 0 19.712.133m0 14.365H5.376A5.381 5.381 0 0 0 0 19.884a5.381 5.381 0 0 0 5.376 5.387h14.336a5.381 5.381 0 0 0 5.376-5.387 5.381 5.381 0 0 0-5.376-5.386"/></g><circle cx="75" cy="23" r="17" fill="#f6412f"/><text class="badgenum" x="74" y="31.500">34</text><circle cx="46" cy="102" r="4" fill="#9db8c5"/></svg>
<!-- Settings -->
<svg width="94" height="108"><rect x="10.500" y="14.500" width="73" height="73" rx="17" fill="url(#gSet)"/><circle cx="47" cy="51" r="31" fill="#2f3031"/><g fill="none" stroke="#a9a9a8"><circle cx="47" cy="51" r="28" stroke="#8e8f8f" stroke-width="3" stroke-dasharray="1.800 1.300"/><circle cx="47" cy="51" r="24.500" stroke-width="3"/><circle cx="47" cy="51" r="15" stroke="#77797a" stroke-width="4"/><path stroke-width="4" d="M47 51H71M47 51 35 30M47 51 35 72"/></g><circle cx="47" cy="51" r="5" fill="#a9a9a8"/><circle cx="47" cy="51" r="2.500" fill="#3a3b3c"/><circle cx="75" cy="23" r="17" fill="#f6412f"/><text class="badgenum" x="75" y="31.500">2</text><circle cx="46" cy="102" r="4" fill="#9db8c5"/></svg>
<!-- Crescent -->
<svg width="94" height="108"><circle cx="47" cy="51" r="39" fill="#fff"/><path fill="#0543ff" d="M22 36q-1 0-1 1-6 32 26 33 32-1 26-33 0-1-1-1-5 16-25 16T22 36Z"/></svg>
<!-- Terminal -->
<svg width="94" height="108"><rect x="10.500" y="14.500" width="73" height="73" rx="17" fill="url(#gSet)"/><rect x="13.500" y="17.500" width="67" height="67" rx="14" fill="#050505"/><rect x="18" y="23" width="57" height="56" rx="9" fill="#262626"/><path d="m24 29 8 4-8 5" fill="none" stroke="#fff" stroke-width="2.600"/><path d="M35 41.500h10" stroke="#fff" stroke-width="2.800"/><circle cx="46" cy="102" r="4" fill="#9db8c5"/></svg>
<!-- Safari -->
<svg width="94" height="108"><rect x="10.500" y="14.500" width="73" height="73" rx="17" fill="url(#gPaper)"/><circle cx="47" cy="51" r="31" fill="url(#gSaf)"/><circle cx="47" cy="51" r="27.500" fill="none" stroke="#cfe8fb" stroke-width="4" stroke-dasharray="1 2.450"/><path d="M69 33 50.500 54 43.500 48Z" fill="#f1372f"/><path d="M26 69 50.500 54 43.500 48Z" fill="#f0f2f5"/><circle cx="46" cy="102" r="4" fill="#9db8c5"/></svg>
<!-- VS Code -->
<svg width="94" height="108"><rect x="10.500" y="14.500" width="73" height="73" rx="17" fill="#fff"/><path fill="#0f6fb5" d="M58 25.500 22 58v4l4 3.500h3L60 42Z"/><path fill="#0f80cc" d="M58 76.500 22 43v-3l4-3.500h3L60 60Z"/><path fill="#2499e8" d="M58 25.500 71.500 32V70L58 76.500Z"/><circle cx="46" cy="102" r="4" fill="#9db8c5"/></svg>
<svg width="41" height="108"><path d="M20.500 12v84" stroke="#64747d" stroke-width="2"/></svg>
<!-- Adobe XD -->
<svg width="94" height="108"><rect x="10.500" y="14.500" width="73" height="73" rx="17" fill="#460037"/><text x="47.500" y="65.500" text-anchor="middle" font-family="Open Sans" font-weight="700" font-size="43" fill="#ff61f6" textLength="53" lengthAdjust="spacingAndGlyphs">Xd</text><circle cx="47" cy="102" r="4" fill="#9db8c5"/></svg>
<!-- Preview -->
<svg width="94" height="108"><rect x="12" y="14.500" width="73" height="73" rx="17" fill="#f1f1ef"/><rect x="17" y="20" width="62" height="62" rx="11" fill="#8cb0ea"/><path d="M17 36H79V54H17Z" fill="#a9c3ec"/><path d="M17 54H79V72q0 10-11 10H28q-11 0-11-10Z" fill="#263f6c"/><path d="M17 70q8-6 14 0t14 4v8H28q-10 0-11-10Z" fill="#d6dce3"/><path d="m22 76 9-4 8 8-9 2Z" fill="#8a7658"/><path d="M49 65H79L86 86q0 5-6 5H49q-6 0-6-5Z" fill="#d5d8db" opacity=".93"/><path d="m57 68 9-3 8 9-5 7-13-3Z" fill="#758aa0"/><rect x="48" y="50" width="32" height="16" rx="5" fill="#111"/><ellipse cx="64" cy="53" rx="15" ry="3.500" fill="#333"/><circle cx="46" cy="102" r="4" fill="#9db8c5"/></svg>
<!-- Zoom -->
<svg width="94" height="108"><rect x="11" y="14.500" width="73" height="73" rx="17" fill="url(#gZoom)"/><text x="47" y="57" text-anchor="middle" font-family="Lato" font-weight="700" font-size="22" fill="#fff" textLength="51" lengthAdjust="spacingAndGlyphs">zoom</text></svg>
<svg width="48" height="108"><path d="M24 12v84" stroke="#64747d" stroke-width="2"/></svg>
<!-- Downloads folder -->
<svg width="84" height="108"><path fill="#21a3dc" d="M0 21q0-5 5-5H24q4 0 6 4l3 4H78q5 0 5 5V50H0Z"/><path fill="#62ccfb" d="M0 28H83V81q0 5-5 5H5q-5 0-5-5Z"/><path fill="#3fb0e4" d="M0 80H83v1q0 5-5 5H5q-5 0-5-5Z"/><circle cx="41.500" cy="54" r="16" fill="#349fdc"/><path d="M41.500 46v15m-6-6 6 6.500 6-6.500" fill="none" stroke="#7ad6ff" stroke-width="2.400" stroke-linecap="round"/></svg>
<!-- Minimised window -->
<svg width="103" height="108"><rect x="26" y="9" width="52" height="84" fill="#222"/><rect x="28" y="11" width="3" height="2" fill="#998"/><rect x="65" y="64" width="27" height="27" rx="6" fill="#f6f6f6"/><use href="#chromelogo" x="67.500" y="66.500" width="22" height="22"/></svg>
<!-- Trash -->
<svg width="88" height="108"><path fill="url(#gTrash)" d="M11 18 18 84q1 7 24 7t24-7L74 18Z"/><ellipse cx="42.500" cy="19" rx="31.500" ry="7" fill="#7f8385"/><path fill="#e6e6e6" d="m17 15 6-3 4-4 7 4 4-3 5 8 8-9 7 8 5 1 4 6-9 4-11-1-8 3-9-4-7-2-7-4Z"/><path fill="#30353a" d="m27 12 5 6-8 4ZM51 11l4 9-7 3ZM61 15l3 6-5-1ZM38 14l3 7-5 2Z"/><path fill="#3bb5c9" d="m33 16 6 2-4 4Z"/><path fill="#d1693c" d="m47 17 4 4-4 3Z"/></svg>
</div>
</footer>
</body>
</html>
